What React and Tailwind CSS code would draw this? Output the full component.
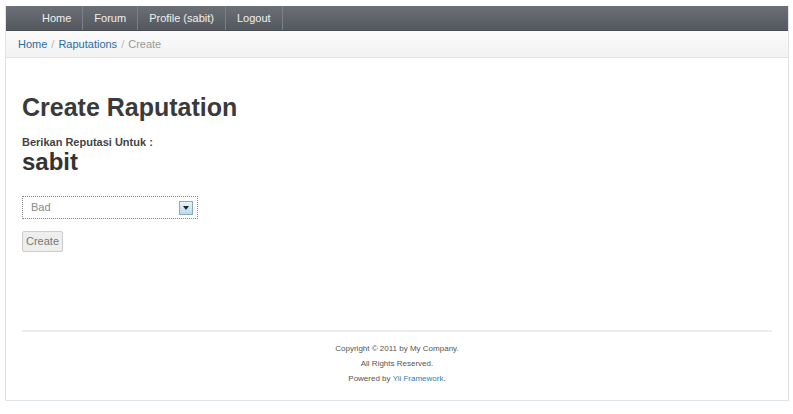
// App.jsx - Create Raputation page

const navItems = ["Home", "Forum", "Profile (sabit)", "Logout"];

function MainMenu() {
  return (
    <div className="h-[25px] bg-gradient-to-b from-[#6b7076] to-[#55595f] flex items-stretch pl-[25px] border-b border-[#4a4e53]">
      {navItems.map((item) => (
        <span
          key={item}
          className="px-[11px] flex items-center text-[11px] text-[#f0f0f0] border-r border-[#7d8187]"
        >
          {item}
        </span>
      ))}
    </div>
  );
}

function Breadcrumbs() {
  return (
    <div className="h-[27px] bg-gradient-to-b from-[#fbfbfb] to-[#f2f2f2] border-b border-[#e3e3e3] flex items-center px-[12px] text-[11px]">
      <span className="text-[#2c6c9b]">Home</span>
      <span className="text-[#bbb] mx-[4px]">/</span>
      <span className="text-[#2c6c9b]">Raputations</span>
      <span className="text-[#bbb] mx-[4px]">/</span>
      <span className="text-[#999]">Create</span>
    </div>
  );
}

function SelectBox() {
  return (
    <div className="w-[176px] h-[23px] border border-dotted border-[#888] flex items-center justify-between pl-[8px] pr-[4px]">
      <span className="text-[11px] text-[#888]">Bad</span>
      <span className="w-[14px] h-[14px] bg-gradient-to-b from-[#e6f4fa] to-[#b9dcea] border border-[#8ab] flex items-center justify-center">
        <svg width="6" height="4" viewBox="0 0 6 4">
          <path d="M0 0 L6 0 L3 4 Z" fill="#223" />
        </svg>
      </span>
    </div>
  );
}

function Footer() {
  return (
    <div className="mx-[16px] border-t-2 border-[#eaeef0] pt-[9px] pb-[14px] text-center text-[8px] leading-[15px] text-[#555]">
      <div>Copyright &copy; 2011 by My Company.</div>
      <div>All Rights Reserved.</div>
      <div>
        Powered by <span className="text-[#2c7fb8]">Yii Framework</span>.
      </div>
    </div>
  );
}

export default function App() {
  return (
    <div className="w-[793px] h-[414px] bg-white pt-[6px] px-[5px] font-['Liberation_Sans',Arial,sans-serif]">
      <div className="w-[784px] h-[395px] border border-[#dde3e6] border-t-0 flex flex-col">
        <MainMenu />
        <Breadcrumbs />
        <div className="flex-1 px-[16px] pt-[34px]">
          <h1 className="text-[25px] font-bold text-[#3a3a3a] leading-[30px]">Create Raputation</h1>
          <div className="mt-[13px] text-[11px] font-bold text-[#444] leading-[14px]">
            Berikan Reputasi Untuk :
          </div>
          <div className="text-[24px] font-bold text-[#333] leading-[25px]">sabit</div>
          <div className="mt-[22px]">
            <SelectBox />
          </div>
          <button className="mt-[12px] h-[21px] px-[3px] border border-[#ccc] bg-[#eee] rounded-[2px] text-[11px] text-[#777]">
            Create
          </button>
        </div>
        <Footer />
      </div>
    </div>
  );
}
